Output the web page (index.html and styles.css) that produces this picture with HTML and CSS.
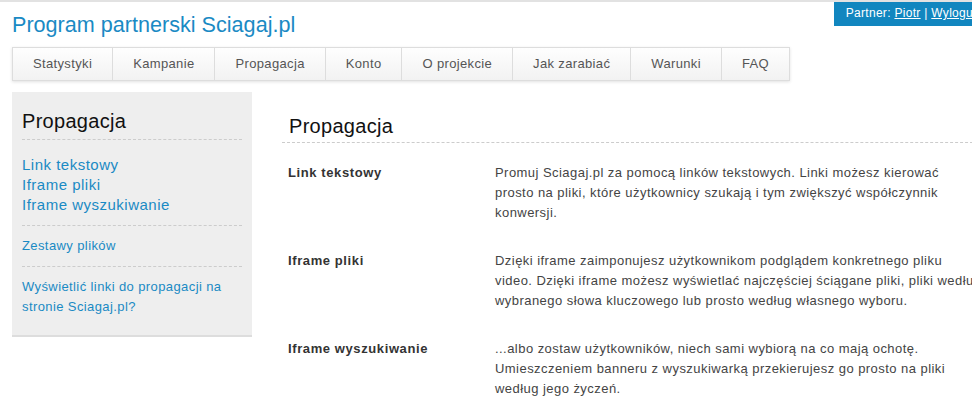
FILE: index.html
```html
<!DOCTYPE html>
<html>
<head>
    <meta charset="utf-8">
    <link rel="stylesheet" href="styles.css">
</head>
<body>
    <div class="page">
        <div class="header">
            <h1 class="site-title">Program partnerski Sciagaj.pl</h1>
            <div class="partner-box">Partner: <a href="#">Piotr</a> | <a href="#">Wyloguj</a></div>
        </div>

        <ul class="nav">
            <li><a href="#">Statystyki</a></li>
            <li><a href="#">Kampanie</a></li>
            <li><a href="#">Propagacja</a></li>
            <li><a href="#">Konto</a></li>
            <li><a href="#">O projekcie</a></li>
            <li><a href="#">Jak zarabiać</a></li>
            <li><a href="#">Warunki</a></li>
            <li><a href="#">FAQ</a></li>
        </ul>

        <div class="layout">
            <div class="sidebar">
                <h2 class="sidebar-title">Propagacja</h2>
                <div class="side-group side-big">
                    <a href="#">Link tekstowy</a>
                    <a href="#">Iframe pliki</a>
                    <a href="#">Iframe wyszukiwanie</a>
                </div>
                <div class="side-group">
                    <a href="#">Zestawy plików</a>
                </div>
                <div class="side-group last">
                    <a href="#">Wyświetlić linki do propagacji na<br>stronie Sciagaj.pl?</a>
                </div>
            </div>

            <div class="main">
                <h2 class="main-title">Propagacja</h2>
                <table class="info-table">
                    <tr>
                        <th>Link tekstowy</th>
                        <td>Promuj Sciagaj.pl za pomocą linków tekstowych. Linki możesz kierować<br>prosto na pliki, które użytkownicy szukają i tym zwiększyć współczynnik<br>konwersji.</td>
                    </tr>
                    <tr>
                        <th>Iframe pliki</th>
                        <td>Dzięki iframe zaimponujesz użytkownikom podglądem konkretnego pliku<br>video. Dzięki iframe możesz wyświetlać najczęściej ściągane pliki, pliki według<br>wybranego słowa kluczowego lub prosto według własnego wyboru.</td>
                    </tr>
                    <tr>
                        <th>Iframe wyszukiwanie</th>
                        <td>...albo zostaw użytkowników, niech sami wybiorą na co mają ochotę.<br>Umieszczeniem banneru z wyszukiwarką przekierujesz go prosto na pliki<br>według jego życzeń.</td>
                    </tr>
                </table>
            </div>
        </div>
    </div>
</body>
</html>
```

FILE: styles.css
```css
html {
    overflow: hidden;
}
body {
    margin: 0;
    font-family: "Liberation Sans", Arial, sans-serif;
    color: #333;
    background: #fff;
    border-top: 2px solid #e2e2e2;
}
a {
    color: #1a8ac4;
    text-decoration: none;
}
.page {
    width: 976px;
    padding: 0 12px;
}
.header {
    display: flex;
    justify-content: space-between;
    align-items: flex-start;
}
.site-title {
    margin: 10px 0 0 0;
    font-size: 21.6px;
    line-height: 26px;
    font-weight: normal;
    color: #1a8ac4;
}
.partner-box {
    margin-top: -2px;
    background-color: #1186bf;
    color: #fff;
    font-size: 12px;
    line-height: 16px;
    letter-spacing: 0.3px;
    padding: 5px 12px 5px 12px;
}
.partner-box a {
    color: #fff;
    text-decoration: underline;
}
.nav {
    display: flex;
    list-style: none;
    margin: 9px 0 0 0;
    padding: 0;
    width: max-content;
    border: 1px solid #ddd;
    background: linear-gradient(#fefefe, #f2f2f2);
    box-shadow: 0 1px 3px rgba(0,0,0,0.12);
}
.nav li {
    border-left: 1px solid #ddd;
}
.nav li:first-child {
    border-left: none;
}
.nav a {
    display: block;
    padding: 0 20px;
    line-height: 32px;
    font-size: 13px;
    letter-spacing: 0.35px;
    color: #555;
}
.layout {
    display: flex;
    gap: 30px;
    margin-top: 11px;
    align-items: flex-start;
}
.sidebar {
    width: 220px;
    flex-shrink: 0;
    background-color: #eee;
    padding: 10px 10px 10px 10px;
    border-bottom: 2px solid #ddd;
}
.sidebar-title {
    margin: 7px 0 0 0;
    font-size: 20px;
    line-height: 24px;
    font-weight: normal;
    letter-spacing: 0.3px;
    color: #111;
    padding-bottom: 6px;
    border-bottom: 1px dashed #ccc;
}
.side-group {
    padding: 10px 0 10px 0;
    border-bottom: 1px dashed #ccc;
    font-size: 13px;
    line-height: 20px;
    letter-spacing: 0.4px;
}
.side-group a {
    display: block;
}
.side-group.side-big {
    padding-top: 15px;
    font-size: 15px;
    letter-spacing: 0.5px;
}
.side-group.last {
    border-bottom: none;
    padding-bottom: 8px;
}
.main {
    flex: 1;
}
.main-title {
    margin: 22px 0 0 0;
    padding: 0 0 4px 7px;
    font-size: 20px;
    line-height: 24px;
    font-weight: normal;
    letter-spacing: 0.3px;
    color: #111;
    border-bottom: 1px dashed #ccc;
}
.info-table {
    width: 100%;
    border-collapse: collapse;
    margin-top: 6px;
    font-size: 13px;
    line-height: 20px;
}
.info-table th {
    width: 195px;
    text-align: left;
    vertical-align: top;
    padding: 14px 6px;
    letter-spacing: 0.6px;
    color: #333;
}
.info-table td {
    vertical-align: top;
    padding: 14px 6px;
    letter-spacing: 0.45px;
    white-space: nowrap;
    color: #444;
}
```
